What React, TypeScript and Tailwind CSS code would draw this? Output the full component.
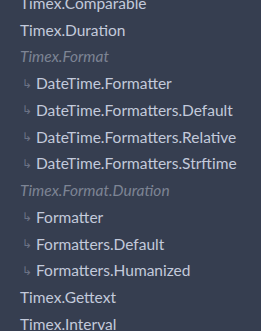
const items: { label: string; kind: "mod" | "group" | "child" }[] = [
  { label: "Timex.Comparable", kind: "mod" },
  { label: "Timex.Duration", kind: "mod" },
  { label: "Timex.Format", kind: "group" },
  { label: "DateTime.Formatter", kind: "child" },
  { label: "DateTime.Formatters.Default", kind: "child" },
  { label: "DateTime.Formatters.Relative", kind: "child" },
  { label: "DateTime.Formatters.Strftime", kind: "child" },
  { label: "Timex.Format.Duration", kind: "group" },
  { label: "Formatter", kind: "child" },
  { label: "Formatters.Default", kind: "child" },
  { label: "Formatters.Humanized", kind: "child" },
  { label: "Timex.Gettext", kind: "mod" },
  { label: "Timex.Interval", kind: "mod" },
];

export default function App() {
  return (
    <div className="h-[331px] w-[261px] overflow-hidden bg-[#363e50] font-['Lato',sans-serif] text-[15.5px]">
      <ul className="-mt-[10px] pl-5">
        {items.map((item) => (
          <li key={item.label} className="flex h-[26.75px] items-center whitespace-nowrap">
            {item.kind === "child" && (
              <span className="w-4 shrink-0 pl-0.5 text-[12px] text-[#6b7285]">↳</span>
            )}
            <span
              className={
                item.kind === "group"
                  ? "italic text-[#7d8494]"
                  : "text-[#c3cadb]"
              }
            >
              {item.label}
            </span>
          </li>
        ))}
      </ul>
    </div>
  );
}
